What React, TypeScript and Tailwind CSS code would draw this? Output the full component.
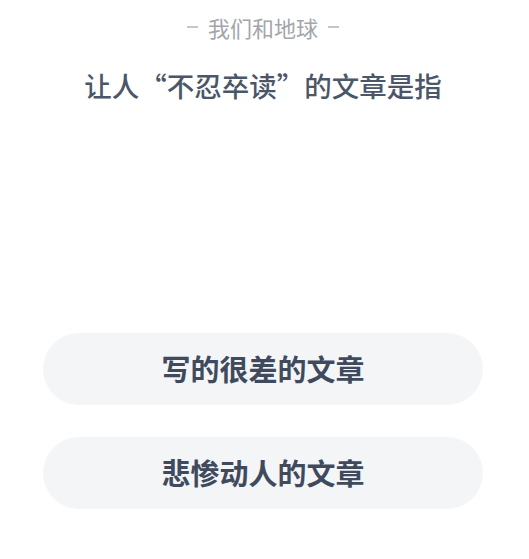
import React from 'react';

const options = ['写的很差的文章', '悲惨动人的文章'];

const App: React.FC = () => {
  return (
    <div
      className="flex h-[559px] w-[529px] flex-col items-center bg-white pr-[3px]"
      style={{ fontFamily: '"Noto Sans CJK SC", "Noto Sans", sans-serif' }}
    >
      <div className="mt-[11px] flex items-center gap-[10px] text-[22px] leading-[32px] text-[#a3a6ab]">
        <span className="h-[1.5px] w-[11px] bg-[#c4c6ca]" />
        <span>我们和地球</span>
        <span className="h-[1.5px] w-[11px] bg-[#c4c6ca]" />
      </div>
      <h1 className="mt-[24px] text-[27.5px] leading-[36px] font-medium text-[#4b5669]">
        让人“不忍卒读”的文章是指
      </h1>
      <div className="mt-[230px] flex w-[440px] flex-col gap-[32px]">
        {options.map((o) => (
          <button
            key={o}
            className="flex h-[72px] w-full items-center justify-center rounded-full bg-[#f4f5f7] text-[29px] font-semibold text-[#3f4b5d]"
          >
            {o}
          </button>
        ))}
      </div>
    </div>
  );
};

export default App;
